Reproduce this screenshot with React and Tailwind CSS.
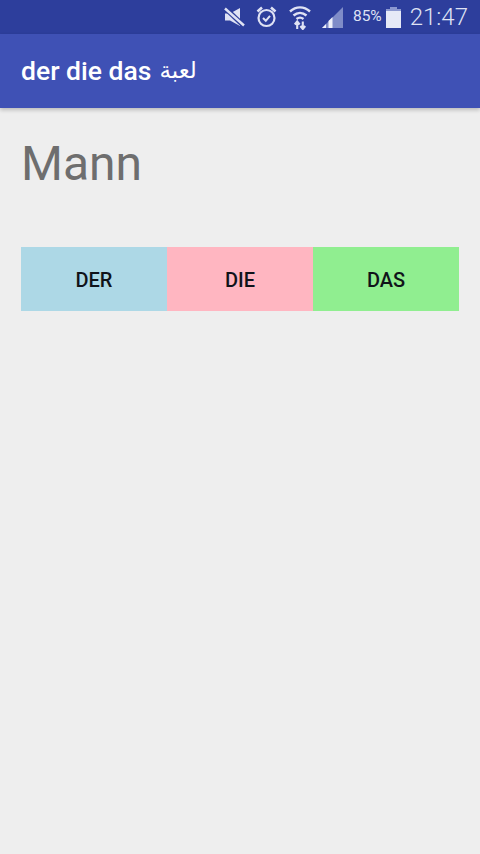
const FONT = { fontFamily: 'Roboto, "Noto Sans", sans-serif' }

function MuteIcon() {
  return (
    <svg width="21" height="20" viewBox="0 0 21 20" className="text-[#dfe2f4]">
      <path d="M1 6.500h5L16 1v18L6 13.500H1z" fill="currentColor" />
      <path d="M1 1l19 18" stroke="#2d3e9c" strokeWidth="5" />
      <path d="M1 1.500l19 17" stroke="currentColor" strokeWidth="2.400" />
    </svg>
  )
}

function AlarmIcon() {
  return (
    <svg width="21" height="22" viewBox="0 0 21 22" fill="none" stroke="#dfe2f4" strokeWidth="2.200">
      <circle cx="10.500" cy="12" r="8" />
      <path d="M1.500 5.500l4.500-4M19.500 5.500l-4.500-4" strokeWidth="2.600" />
      <path d="M7 12l2.800 2.800 4.200-5" strokeWidth="2" />
    </svg>
  )
}

function WifiIcon() {
  return (
    <svg width="22" height="25" viewBox="0 0 22 25" fill="none" stroke="#dfe2f4" strokeWidth="2.400">
      <path d="M1 6.500c6-5.500 14-5.500 20 0" />
      <path d="M4.500 10.500c4-3.500 9-3.500 13 0" />
      <path d="M7.500 14c2.300-1.800 4.700-1.800 7 0" />
      <path d="M8.200 24v-7M5.800 19.500l2.400-3 2.400 3M13.800 16.500v7M11.400 21l2.400 3 2.400-3" strokeWidth="2.100" />
    </svg>
  )
}

function SignalIcon() {
  return (
    <svg width="22" height="21" viewBox="0 0 22 21">
      <path d="M21 0v21H0z" fill="#7f8cc8" />
      <path d="M0 21l4-4v4zM6.500 21v-7l4-4v11z" fill="#eef0fa" />
    </svg>
  )
}

function BatteryIcon() {
  return (
    <svg width="15" height="21" viewBox="0 0 15 21">
      <path d="M4 0h7v2h4v19H0V2h4z" fill="#8c98d0" />
      <path d="M0 4h15v17H0z" fill="#e6e9f7" />
    </svg>
  )
}

function StatusBar() {
  return (
    <div className="h-[34px] bg-[#2d3e9c] flex items-center justify-end pr-[12px] text-[#dfe2f4]">
      <div className="mr-[11px]"><MuteIcon /></div>
      <div className="mr-[12px]"><AlarmIcon /></div>
      <div className="mr-[11px]"><WifiIcon /></div>
      <div className="mr-[9px]"><SignalIcon /></div>
      <span className="text-[15.500px] mr-[4px]">85%</span>
      <BatteryIcon />
      <span className="text-[24px] ml-[9px] font-light">21:47</span>
    </div>
  )
}

function ArticleButton({ label, color }) {
  return (
    <button className={`flex-1 h-full flex items-center justify-center pt-[1px] text-[20px] font-medium text-[#10131a] ${color}`}>
      {label}
    </button>
  )
}

export default function App() {
  return (
    <div className="h-[854px] flex flex-col bg-[#eeeeee]" style={FONT}>
      <StatusBar />
      <header className="h-[74px] bg-[#3f51b5] flex items-center pl-[21px] pb-[1px] text-[26.500px] font-medium text-white shadow-[0_2px_4px_rgba(0,0,0,0.22)]">
        der die das <span dir="rtl" className="ml-[8px] font-normal" style={{ fontFamily: '"DejaVu Sans", sans-serif', fontSize: 23 }}>لعبة</span>
      </header>
      <main className="flex-1 px-[21px]">
        <h1 className="mt-[26px] text-[48px] leading-[60px] text-[#6e6e6e]">Mann</h1>
        <div className="mt-[53px] h-[64px] flex">
          <ArticleButton label="DER" color="bg-[#add8e6]" />
          <ArticleButton label="DIE" color="bg-[#ffb6c1]" />
          <ArticleButton label="DAS" color="bg-[#90ee90]" />
        </div>
      </main>
    </div>
  )
}
